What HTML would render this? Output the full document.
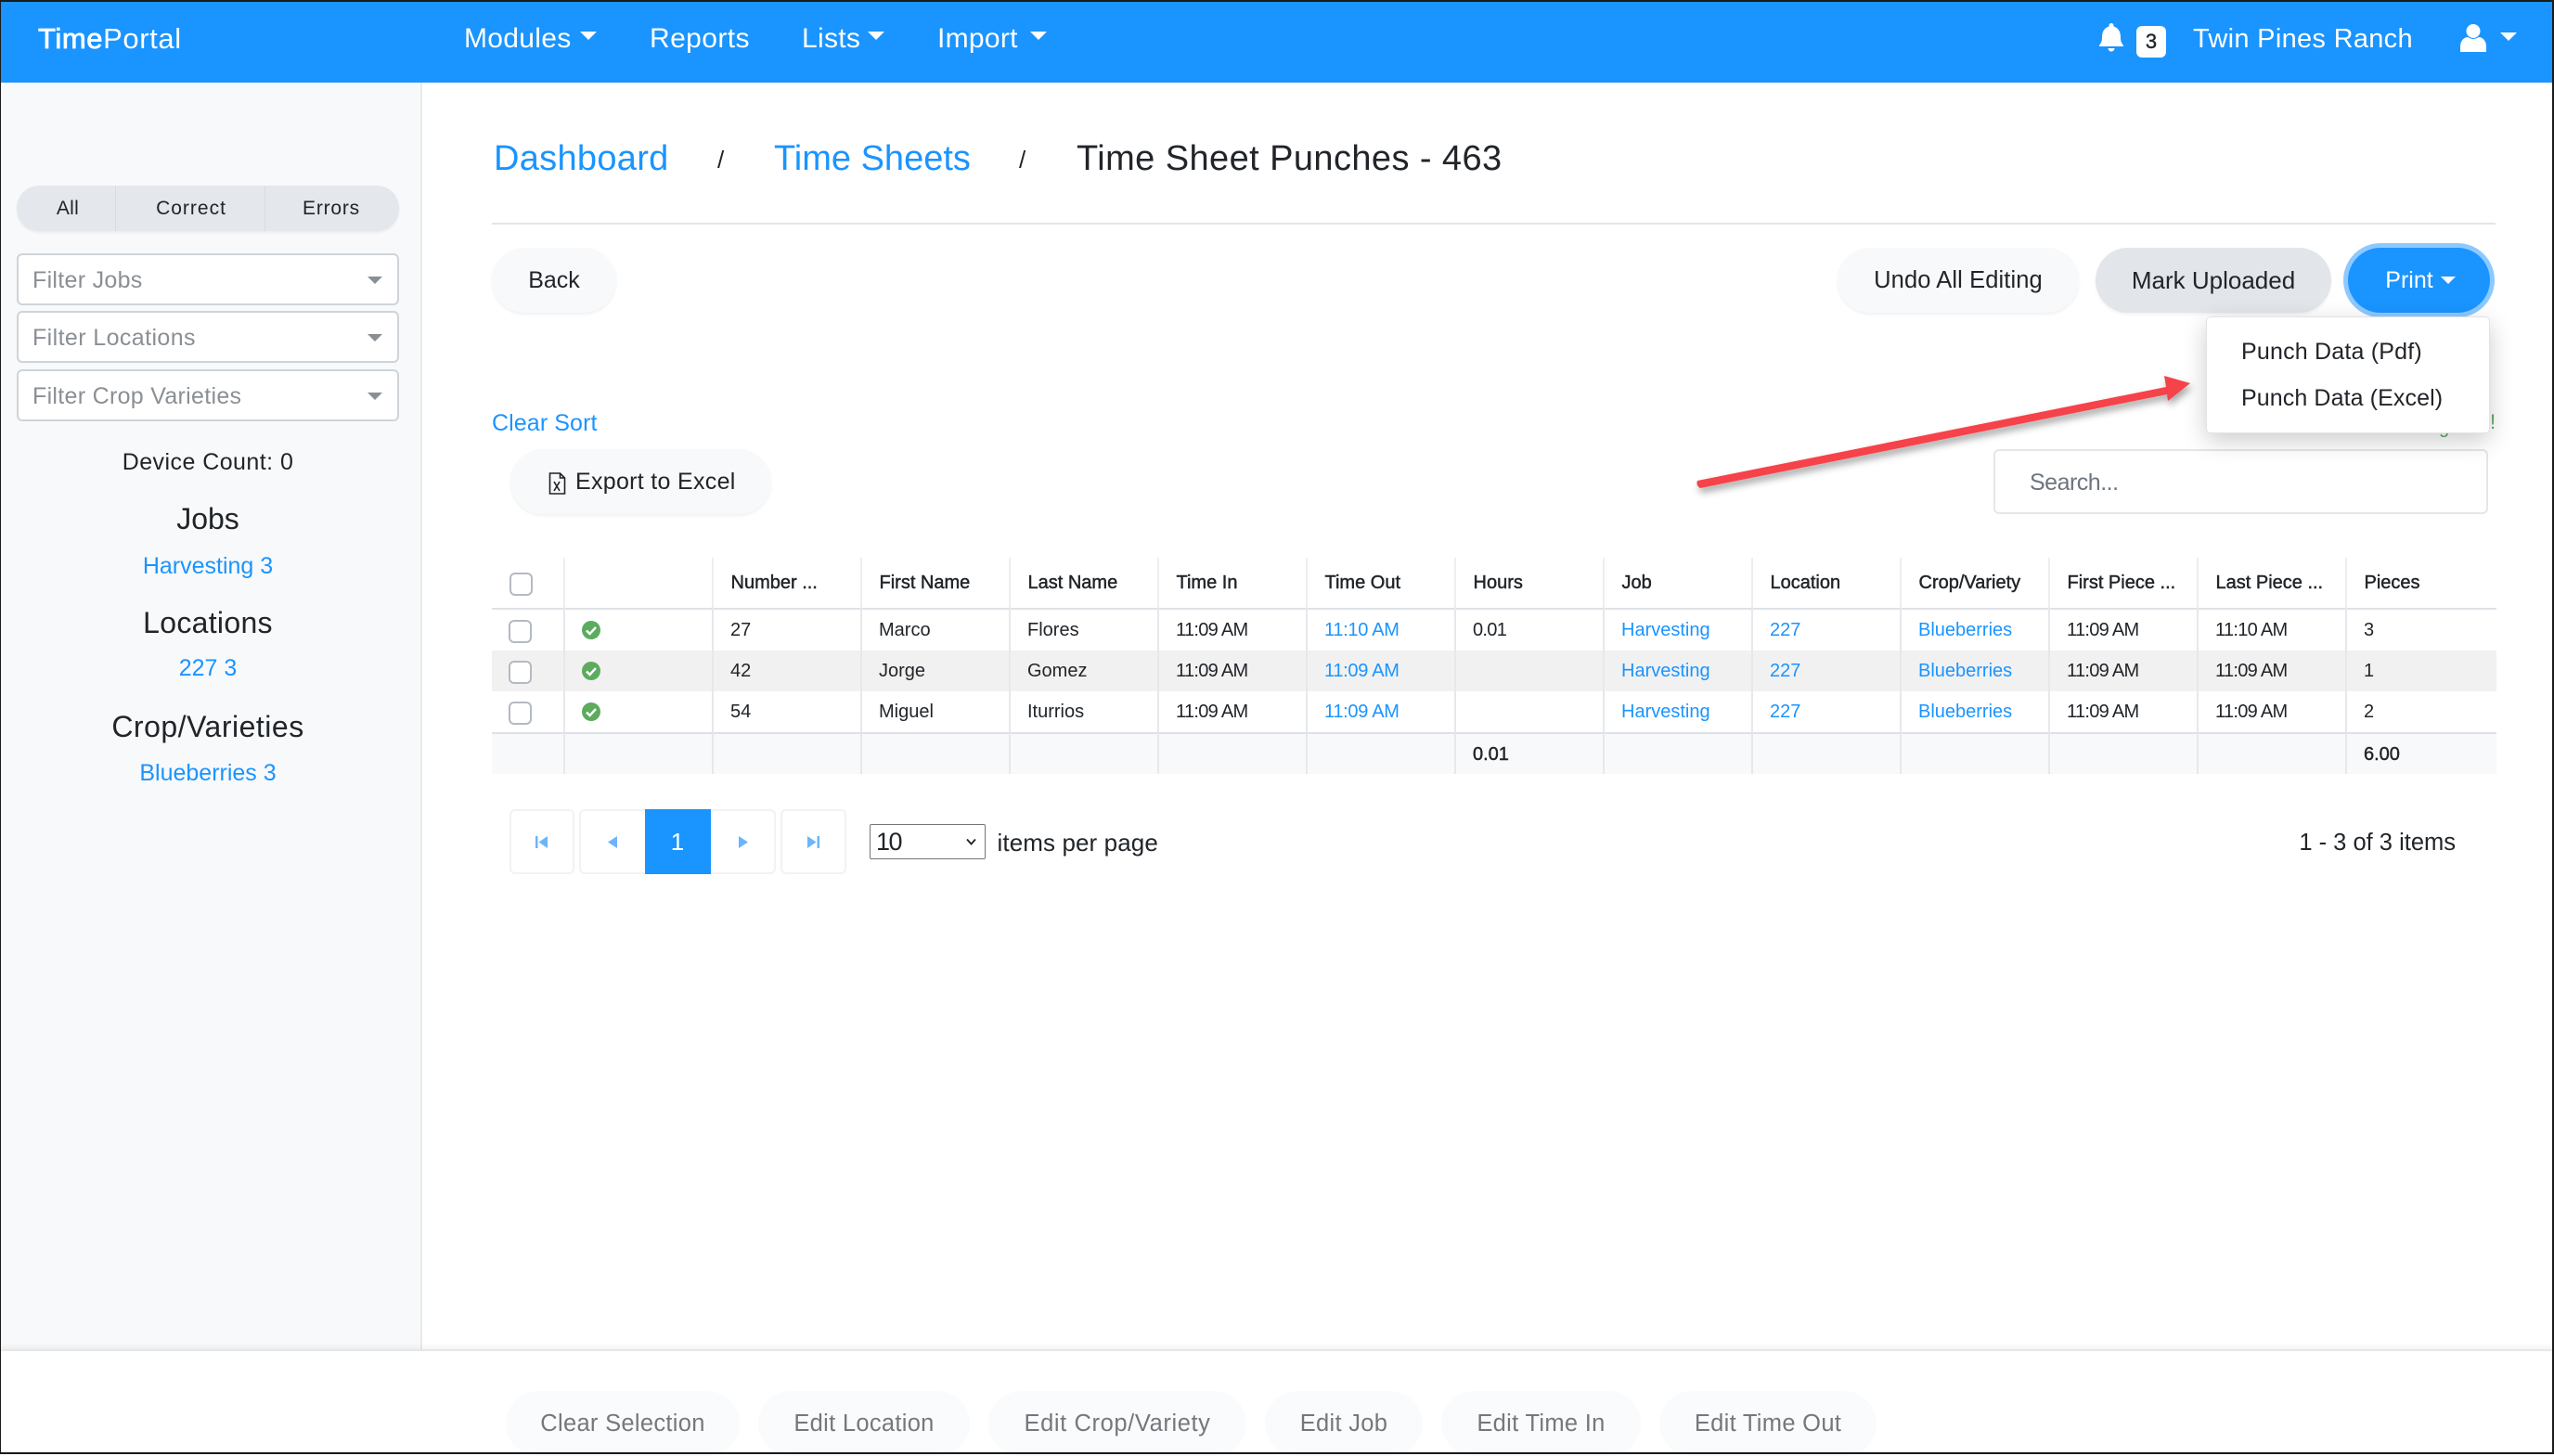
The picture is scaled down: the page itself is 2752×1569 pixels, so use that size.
<!DOCTYPE html>
<html lang="en"><head><meta charset="utf-8"><title>TimePortal</title>
<style>
*{box-sizing:border-box}
html,body{margin:0;padding:0;width:2752px;height:1567px;overflow:hidden;background:#fff;font-family:"Liberation Sans",sans-serif;color:#212529}
.t{position:absolute;line-height:0;white-space:nowrap;font-size:25px}
.c{transform:translateX(-50%)}
.r{transform:translateX(-100%)}
.l{color:#1a94ff}
.w{color:#fff}
.box{position:absolute}
.tri{position:absolute;width:0;height:0;border-style:solid;border-color:#fff transparent transparent transparent}
.btn{position:absolute;top:267px;height:70px;border-radius:35px;background:#f8f9fa;box-shadow:0 2px 3px rgba(0,0,0,.06);display:flex;align-items:center;justify-content:center;font-size:25px;white-space:nowrap}
.sel{position:absolute;left:19px;width:411px;background:#fff;border:2px solid #ced4da;border-radius:6px}
.car{position:absolute;left:396px;width:0;height:0;border-style:solid;border-width:8px 8px 0 8px;border-color:#8a8f94 transparent transparent transparent}
.fb{position:absolute;top:1499px;height:70px;border-radius:35px;background:#fafbfc;color:#74787d;display:flex;align-items:center;justify-content:center;font-size:25.5px;letter-spacing:.3px;white-space:nowrap;padding-top:1px}
table{position:absolute;left:530px;top:601px;width:2160px;border-collapse:separate;border-spacing:0;table-layout:fixed;font-size:20px}
th{height:56px;font-weight:400;-webkit-text-stroke:.45px #212529;text-align:left;padding:1px 0 0 18.5px;border-right:2px solid #eceef1;border-bottom:2px solid #dee2e6;white-space:nowrap;overflow:hidden}
td{height:44px;padding:1px 0 0 18px;border-right:2px solid #e6e8eb;white-space:nowrap}
th:last-child,td:last-child{border-right:0}
tbody tr:nth-child(2) td{background:#f1f1f1}
tfoot td{height:45px;background:#f8f9fa;border-top:2px solid #dee2e6;-webkit-text-stroke:.45px #212529}
td.tm{letter-spacing:-.7px}
td a{color:#1a94ff;text-decoration:none}
td a.tm{letter-spacing:-.3px}
tfoot td.tm{letter-spacing:0}
.cb{position:absolute;left:548px;width:25px;height:25px;background:#fff;border:2px solid #b4bac1;border-radius:6px}
.pg{position:absolute;top:872px;height:70px;border:2px solid #f1f2f4;border-radius:6px;background:#fff}
</style></head><body>

<!-- nav -->
<div class="box" style="left:0;top:0;width:2752px;height:89px;background:#1a94ff"></div>
<span class="t w" style="left:41px;top:42px;font-size:31px;letter-spacing:.6px"><span style="-webkit-text-stroke:.8px #fff">Time</span>Portal</span>
<span class="t w" style="left:500px;top:42px;font-size:30px;letter-spacing:.3px">Modules</span>
<span class="tri" style="left:625px;top:34px;border-width:9px 9px 0 9px"></span>
<span class="t w" style="left:700px;top:42px;font-size:30px;letter-spacing:.4px">Reports</span>
<span class="t w" style="left:864px;top:42px;font-size:30px;letter-spacing:.3px">Lists</span>
<span class="tri" style="left:935px;top:34px;border-width:9px 9px 0 9px"></span>
<span class="t w" style="left:1010px;top:42px;font-size:30px;letter-spacing:.3px">Import</span>
<span class="tri" style="left:1110px;top:34px;border-width:9px 9px 0 9px"></span>
<svg class="box" style="left:2262px;top:25px" width="26" height="31" viewBox="0 0 26 31"><path fill="#fff" d="M13 0a2.5 2.5 0 0 1 2.5 2.5v1C21 5 23 10 23 15c0 5 1 6 3 9v1H0v-1c2-3 3-4 3-9C3 10 5 5 10.5 3.5v-1A2.5 2.5 0 0 1 13 0zM9.5 27h7a3.5 3.5 0 0 1-7 0z"/></svg>
<div class="box" style="left:2302px;top:28px;width:32px;height:34px;background:#fff;border-radius:6px"></div>
<span class="t c" style="left:2318px;top:45px;font-size:22px;-webkit-text-stroke:.4px #212529">3</span>
<span class="t w" style="left:2363px;top:42px;font-size:29px;letter-spacing:.3px">Twin Pines Ranch</span>
<svg class="box" style="left:2651px;top:26px" width="28" height="30" viewBox="0 0 28 30"><circle cx="14" cy="7.5" r="7.5" fill="#fff"/><path fill="#fff" d="M0 30v-6c0-6 4-10 8-10 2 1 4 2 6 2s4-1 6-2c4 0 8 4 8 10v6z"/></svg>
<span class="tri" style="left:2694px;top:35px;border-width:9px 9px 0 9px"></span>

<!-- sidebar -->
<div class="box" style="left:0;top:89px;width:455px;height:1365px;background:#f8f9fa;border-right:2px solid #e7e9ec"></div>
<div class="box" style="left:18px;top:200px;width:412px;height:49px;border-radius:24px;background:#e4e7eb;box-shadow:0 2px 2px rgba(0,0,0,.05)"></div>
<div class="box" style="left:124px;top:200px;width:1px;height:49px;background:#d8dbe0"></div>
<div class="box" style="left:285px;top:200px;width:1px;height:49px;background:#d8dbe0"></div>
<span class="t c" style="left:73px;top:225px;font-size:21px;letter-spacing:.3px">All</span>
<span class="t c" style="left:206px;top:225px;font-size:21px;letter-spacing:1px">Correct</span>
<span class="t c" style="left:357px;top:225px;font-size:21px;letter-spacing:.8px">Errors</span>

<div class="sel" style="left:18px;width:412px;top:273px;height:56px"></div>
<span class="t" style="left:35px;top:302px;color:#8a8f94;font-size:25px;letter-spacing:.3px">Filter Jobs</span>
<span class="car" style="top:298px"></span>
<div class="sel" style="left:18px;width:412px;top:335px;height:56px"></div>
<span class="t" style="left:35px;top:364px;color:#8a8f94;font-size:25px;letter-spacing:.4px">Filter Locations</span>
<span class="car" style="top:360px"></span>
<div class="sel" style="left:18px;width:412px;top:398px;height:56px"></div>
<span class="t" style="left:35px;top:427px;color:#8a8f94;font-size:25px;letter-spacing:.3px">Filter Crop Varieties</span>
<span class="car" style="top:423px"></span>

<span class="t c" style="left:224px;top:498px;font-size:25px;letter-spacing:.45px">Device Count: 0</span>
<span class="t c" style="left:224px;top:559px;font-size:32px">Jobs</span>
<span class="t c l" style="left:224px;top:610px;font-size:25px">Harvesting 3</span>
<span class="t c" style="left:224px;top:671px;font-size:32px;letter-spacing:.3px">Locations</span>
<span class="t c l" style="left:224px;top:720px;font-size:25px">227 3</span>
<span class="t c" style="left:224px;top:783px;font-size:32px;letter-spacing:.5px">Crop/Varieties</span>
<span class="t c l" style="left:224px;top:833px;font-size:25px">Blueberries 3</span>

<!-- breadcrumb -->
<span class="t l" style="left:532px;top:171px;font-size:38px;letter-spacing:.3px">Dashboard</span>
<span class="t" style="left:773px;top:172px;font-size:26px">/</span>
<span class="t l" style="left:834px;top:171px;font-size:38px">Time Sheets</span>
<span class="t" style="left:1098px;top:172px;font-size:26px">/</span>
<span class="t" style="left:1160px;top:171px;font-size:38px;letter-spacing:.42px">Time Sheet Punches - 463</span>
<div class="box" style="left:530px;top:240px;width:2159px;height:2px;background:#e3e5e8"></div>

<!-- actions -->
<div class="btn" style="left:530px;width:134px">Back</div>
<div class="btn" style="left:1980px;width:260px;font-size:25.5px;letter-spacing:.1px">Undo All Editing</div>
<div class="btn" style="left:2258px;width:254px;font-size:26px;background:#e2e5ea">Mark Uploaded</div>
<div class="box" style="left:2530px;top:267px;width:153px;height:70px;border-radius:35px;background:#1a94ff;box-shadow:0 0 0 5px rgba(26,148,255,.5)"></div>
<span class="t c w" style="left:2596px;top:302px;font-size:25px">Print</span>
<span class="tri" style="left:2630px;top:298px;border-width:8px 8px 0 8px"></span>

<span class="t l" style="left:530px;top:456px;font-size:25px;letter-spacing:.1px">Clear Sort</span>
<div class="btn" style="left:550px;top:484px;width:281px"></div>
<svg class="box" style="left:591px;top:509px" width="19" height="24" viewBox="0 0 19 24"><path fill="none" stroke="#222" stroke-width="1.6" d="M1.5 1h11l5 5v17h-16zM12.5 1v5h5"/><path fill="none" stroke="#222" stroke-width="1.6" d="M6 10l6 10M12 10l-6 10"/></svg>
<span class="t" style="left:620px;top:519px;font-size:25px;letter-spacing:.3px">Export to Excel</span>

<div class="box" style="left:2148px;top:484px;width:533px;height:70px;border:2px solid #e3e6ea;border-radius:6px;background:#fff"></div>
<span class="t" style="left:2187px;top:520px;font-size:25px;color:#6c757d;letter-spacing:-.5px">Search...</span>

<span class="t" style="left:2628px;top:461px;font-size:20px;color:#5cab5e">g</span>
<span class="t" style="left:2683px;top:455px;font-size:22px;color:#5cab5e">!</span>

<!-- dropdown -->
<div class="box" style="left:2377px;top:341px;width:306px;height:126px;background:#fff;border:1px solid #e2e3e5;border-radius:5px;box-shadow:0 8px 26px rgba(0,0,0,.2)"></div>
<span class="t" style="left:2415px;top:379px;font-size:25px;letter-spacing:.2px">Punch Data (Pdf)</span>
<span class="t" style="left:2415px;top:429px;font-size:25px;letter-spacing:.1px">Punch Data (Excel)</span>

<!-- table -->
<table>
<colgroup><col style="width:79px"><col style="width:160px"><col style="width:160px"><col style="width:160px"><col style="width:160px"><col style="width:160px"><col style="width:160px"><col style="width:160px"><col style="width:160px"><col style="width:160px"><col style="width:160px"><col style="width:160px"><col style="width:160px"><col style="width:161px"></colgroup>
<thead><tr><th></th><th></th><th>Number ...</th><th>First Name</th><th>Last Name</th><th>Time In</th><th>Time Out</th><th>Hours</th><th>Job</th><th>Location</th><th>Crop/Variety</th><th>First Piece ...</th><th>Last Piece ...</th><th>Pieces</th></tr></thead>
<tbody>
<tr><td></td><td></td><td>27</td><td>Marco</td><td>Flores</td><td class="tm">11:09 AM</td><td><a class="tm">11:10 AM</a></td><td class="tm">0.01</td><td><a>Harvesting</a></td><td><a>227</a></td><td><a>Blueberries</a></td><td class="tm">11:09 AM</td><td class="tm">11:10 AM</td><td>3</td></tr>
<tr><td></td><td></td><td>42</td><td>Jorge</td><td>Gomez</td><td class="tm">11:09 AM</td><td><a class="tm">11:09 AM</a></td><td></td><td><a>Harvesting</a></td><td><a>227</a></td><td><a>Blueberries</a></td><td class="tm">11:09 AM</td><td class="tm">11:09 AM</td><td>1</td></tr>
<tr><td></td><td></td><td>54</td><td>Miguel</td><td>Iturrios</td><td class="tm">11:09 AM</td><td><a class="tm">11:09 AM</a></td><td></td><td><a>Harvesting</a></td><td><a>227</a></td><td><a>Blueberries</a></td><td class="tm">11:09 AM</td><td class="tm">11:09 AM</td><td>2</td></tr>
</tbody>
<tfoot><tr><td></td><td></td><td></td><td></td><td></td><td></td><td></td><td class="tm">0.01</td><td></td><td></td><td></td><td></td><td></td><td class="tm">6.00</td></tr></tfoot>
</table>
<div class="cb" style="left:549px;top:617px"></div>
<div class="cb" style="top:668px"></div>
<div class="cb" style="top:712px"></div>
<div class="cb" style="top:756px"></div>
<svg class="box" style="left:627px;top:669px" width="20" height="20" viewBox="0 0 20 20"><circle cx="10" cy="10" r="10" fill="#5cab5e"/><path d="M5 10.5l3.5 3.5L15 7" fill="none" stroke="#fff" stroke-width="2.4"/></svg>
<svg class="box" style="left:627px;top:713px" width="20" height="20" viewBox="0 0 20 20"><circle cx="10" cy="10" r="10" fill="#5cab5e"/><path d="M5 10.5l3.5 3.5L15 7" fill="none" stroke="#fff" stroke-width="2.4"/></svg>
<svg class="box" style="left:627px;top:757px" width="20" height="20" viewBox="0 0 20 20"><circle cx="10" cy="10" r="10" fill="#5cab5e"/><path d="M5 10.5l3.5 3.5L15 7" fill="none" stroke="#fff" stroke-width="2.4"/></svg>

<!-- pager -->
<div class="pg" style="left:549px;width:70px"></div>
<div class="pg" style="left:624px;width:212px"></div>
<div class="pg" style="left:841px;width:71px"></div>
<div class="box" style="left:695px;top:872px;width:71px;height:70px;background:#1a94ff"></div>
<span class="t c w" style="left:730px;top:907px;font-size:26px">1</span>
<svg class="box" style="left:577px;top:901px" width="13" height="13" viewBox="0 0 13 13"><path fill="#6cb4fb" d="M0 0h2.5v13H0zM13 0v13L3.5 6.500z"/></svg>
<svg class="box" style="left:655px;top:901px" width="10" height="13" viewBox="0 0 10 13"><path fill="#6cb4fb" d="M10 0v13L0 6.500z"/></svg>
<svg class="box" style="left:796px;top:901px" width="10" height="13" viewBox="0 0 10 13"><path fill="#6cb4fb" d="M0 0v13L10 6.500z"/></svg>
<svg class="box" style="left:870px;top:901px" width="13" height="13" viewBox="0 0 13 13"><path fill="#6cb4fb" d="M0 0v13L9.500 6.500zM10.500 0H13v13h-2.500z"/></svg>
<div class="box" style="left:937px;top:888px;width:125px;height:38px;border:1.5px solid #767676;border-radius:2px;background:#fff"></div>
<span class="t" style="left:944px;top:907px;font-size:27px;letter-spacing:-1.500px">10</span>
<svg class="box" style="left:1041px;top:903px" width="11" height="8" viewBox="0 0 11 8"><path d="M1 1.500l4.500 5 4.500-5" fill="none" stroke="#222" stroke-width="1.8"/></svg>
<span class="t" style="left:1074.500px;top:908px;font-size:26px;letter-spacing:.1px">items per page</span>
<span class="t r" style="left:2646px;top:908px;font-size:25.500px">1 - 3 of 3 items</span>

<!-- arrow -->
<svg class="box" style="left:1800px;top:390px" width="590" height="160" viewBox="1800 390 590 160">
<defs><filter id="s" x="-10%" y="-30%" width="120%" height="170%"><feDropShadow dx="2" dy="5" stdDeviation="4" flood-color="#000" flood-opacity=".35"/></filter></defs>
<path filter="url(#s)" fill="#f64348" d="M1829 518L2334 417L2332 405L2360 413L2336 432L2335 425L1832 526Q1827 523 1829 518z"/>
</svg>

<!-- bottom bar -->
<div class="box" style="left:0;top:1454px;width:2752px;height:113px;background:#fff;border-top:2px solid #e6e7e9;box-shadow:0 -3px 6px rgba(0,0,0,.05)"></div>
<div class="fb" style="left:545px;width:252px">Clear Selection</div>
<div class="fb" style="left:817px;width:228px">Edit Location</div>
<div class="fb" style="left:1065px;width:278px;letter-spacing:.6px">Edit Crop/Variety</div>
<div class="fb" style="left:1363px;width:170px">Edit Job</div>
<div class="fb" style="left:1553px;width:215px">Edit Time In</div>
<div class="fb" style="left:1788px;width:234px">Edit Time Out</div>

<!-- screenshot frame -->
<div class="box" style="left:0;top:0;width:2752px;height:1567px;border-style:solid;border-color:#1b1b1b;border-width:2px 2px 2px 1px;pointer-events:none"></div>
</body></html>
